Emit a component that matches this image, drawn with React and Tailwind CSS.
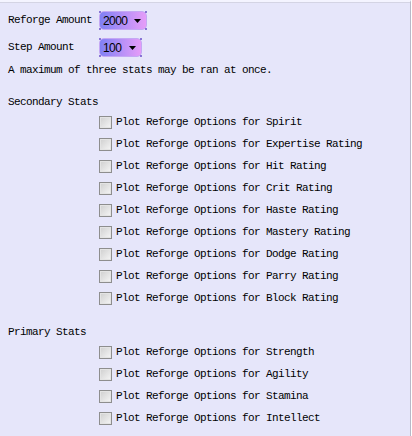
import React from 'react';

const secondary = ['Spirit', 'Expertise Rating', 'Hit Rating', 'Crit Rating', 'Haste Rating', 'Mastery Rating', 'Dodge Rating', 'Parry Rating', 'Block Rating'];
const primary = ['Strength', 'Agility', 'Stamina', 'Intellect'];

const mono = { fontFamily: '"Liberation Mono", "DejaVu Sans Mono", monospace' };

function FakeSelect({ value, width }) {
  return (
    <div
      className={`relative flex items-center h-[19px] rounded-[5px] border border-[#c4a8f4] bg-gradient-to-r from-[#8080f4] to-[#e69cf8] pl-[3px] ${width}`}
    >
      <span className="text-[12px] leading-none text-black" style={{ fontFamily: '"Liberation Sans", Arial, sans-serif' }}>
        {value}
      </span>
      <svg className="absolute right-[5px] top-[7px]" width="7" height="4" viewBox="0 0 7 4">
        <path d="M0 0h7L3.5 4z" fill="#000" />
      </svg>
      <span className="absolute -left-[1px] -top-[1px] w-[2px] h-[2px] rounded-full bg-[#6a4fc8]" />
      <span className="absolute -right-[1px] -top-[1px] w-[2px] h-[2px] rounded-full bg-[#6a4fc8]" />
      <span className="absolute -left-[1px] -bottom-[1px] w-[2px] h-[2px] rounded-full bg-[#6a4fc8]" />
      <span className="absolute -right-[1px] -bottom-[1px] w-[2px] h-[2px] rounded-full bg-[#6a4fc8]" />
    </div>
  );
}

function Check({ label }) {
  return (
    <div className="flex items-center h-[22px] pl-[91px]">
      <span className="w-[13px] h-[13px] border border-[#8e8e8e] bg-gradient-to-br from-[#cfcfcf] to-[#f6f6f6] shadow-[inset_0_0_0_1px_#e4e4e4]" />
      <span className="ml-[4px] text-[11px] tracking-[-0.6px] text-black leading-none">Plot Reforge Options for {label}</span>
    </div>
  );
}

export default function App() {
  return (
    <div className="w-[412px] h-[436px] bg-white">
      <div className="h-full mr-[1px] bg-[#e6e6fa] border-t-2 border-t-[#f4f4ff] border-r border-r-[#b8b8c8] overflow-hidden" style={mono}>
        <div className="h-[1px] bg-[#d4d4e4]" />
        <div className="pl-[8px] pt-[4px] text-[11px] tracking-[-0.6px] text-black">
          <div className="flex items-center h-[27px]">
            <span className="w-[91px] leading-none">Reforge Amount</span>
            <FakeSelect value="2000" width="w-[48px]" />
          </div>
          <div className="flex items-center h-[27px]">
            <span className="w-[91px] leading-none">Step Amount</span>
            <FakeSelect value="100" width="w-[43px]" />
          </div>
          <div className="flex items-center h-[18px] leading-none">A maximum of three stats may be ran at once.</div>
          <div className="flex items-center h-[18px] mt-[14px] leading-none">Secondary Stats</div>
        </div>
        <div className="pl-[8px]">
          {secondary.map((s) => (
            <Check key={s} label={s} />
          ))}
        </div>
        <div className="pl-[8px] text-[11px] tracking-[-0.6px] flex items-center h-[18px] mt-[14px] leading-none">Primary Stats</div>
        <div className="pl-[8px]">
          {primary.map((s) => (
            <Check key={s} label={s} />
          ))}
        </div>
      </div>
    </div>
  );
}
